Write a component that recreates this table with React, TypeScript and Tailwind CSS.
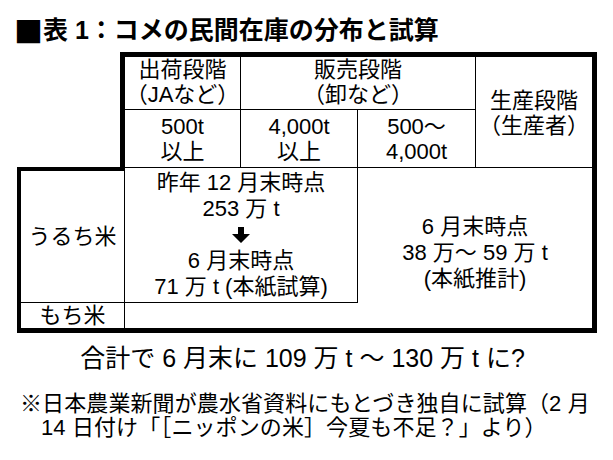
const DownArrow = () => (
  <svg width="18" height="16" viewBox="0 0 18 16" className="inline-block">
    <path d="M6 0h6v7h6l-9 9-9-9h6z" fill="#000" />
  </svg>
);

export default function App() {
  return (
    <div className="w-[613px] h-[460px] bg-white text-black font-['Liberation_Sans','Noto_Sans_CJK_JP',sans-serif]">
      <div className="pt-[10px] pb-[2px] pl-[16px] h-[52px] text-[25px] font-bold leading-[30px] flex items-center">
        <span className="font-['Noto_Sans_CJK_JP',sans-serif] text-[29px] leading-[30px] font-bold -ml-[2px]">■</span>
        <span>表 1：コメの民間在庫の分布と試算</span>
      </div>

      {/* upper part of the table */}
      <div className="ml-[120px] w-[477px] border-t-[5px] border-x-[5px] border-black grid grid-cols-[116px_117px_118px_116px] grid-rows-[53px_57px] text-[22px] leading-[25px] text-center">
        <div className="border-r border-b border-black flex flex-col items-center justify-center pb-[3px]">
          <span>出荷段階</span>
          <span>（JAなど）</span>
        </div>
        <div className="col-span-2 border-r border-b border-black flex flex-col items-center justify-center pb-[3px]">
          <span>販売段階</span>
          <span>（卸など）</span>
        </div>
        <div className="row-span-2 flex flex-col items-center justify-center pt-[1px]">
          <span>生産段階</span>
          <span>（生産者）</span>
        </div>
        <div className="border-r border-black flex flex-col items-center justify-center">
          <span>500t</span>
          <span>以上</span>
        </div>
        <div className="border-r border-black flex flex-col items-center justify-center">
          <span>4,000t</span>
          <span>以上</span>
        </div>
        <div className="border-r border-black flex flex-col items-center justify-center">
          <span>500〜</span>
          <span>4,000t</span>
        </div>
      </div>

      {/* lower part of the table */}
      <div className="ml-[17px] w-[580px] grid grid-cols-[108px_233px_239px] grid-rows-[136px_30px] text-[22px] leading-[26px] text-center">
        <div className="border-l-[4px] border-t-[4px] border-r border-b border-black flex items-center justify-center">
          うるち米
        </div>
        <div className="border-t border-r border-b border-black flex flex-col items-center justify-center">
          <span>昨年 12 月末時点</span>
          <span>253 万 t</span>
          <span className="h-[26px] flex items-center">
            <DownArrow />
          </span>
          <span>6 月末時点</span>
          <span>71 万 t (本紙試算)</span>
        </div>
        <div className="row-span-2 border-t border-r-[5px] border-b-[5px] border-black flex flex-col items-center justify-center pt-[10px]">
          <span>6 月末時点</span>
          <span>38 万〜 59 万 t</span>
          <span>(本紙推計)</span>
        </div>
        <div className="border-l-[4px] border-r border-b-[5px] border-black flex items-center justify-center">
          もち米
        </div>
        <div className="border-b-[5px] border-black"></div>
      </div>

      <div className="mt-[10px] h-[30px] text-[25px] leading-[30px] text-center pr-[8px]">
        合計で 6 月末に 109 万 t 〜 130 万 t に?
      </div>

      <div className="mt-[19px] pl-[20px] text-[22px] leading-[24px] tracking-[0.1px]">
        <div>※日本農業新聞が農水省資料にもとづき独自に試算（2 月</div>
        <div className="pl-[21px]">14 日付け「［ニッポンの米］今夏も不足？」より）</div>
      </div>
    </div>
  );
}
